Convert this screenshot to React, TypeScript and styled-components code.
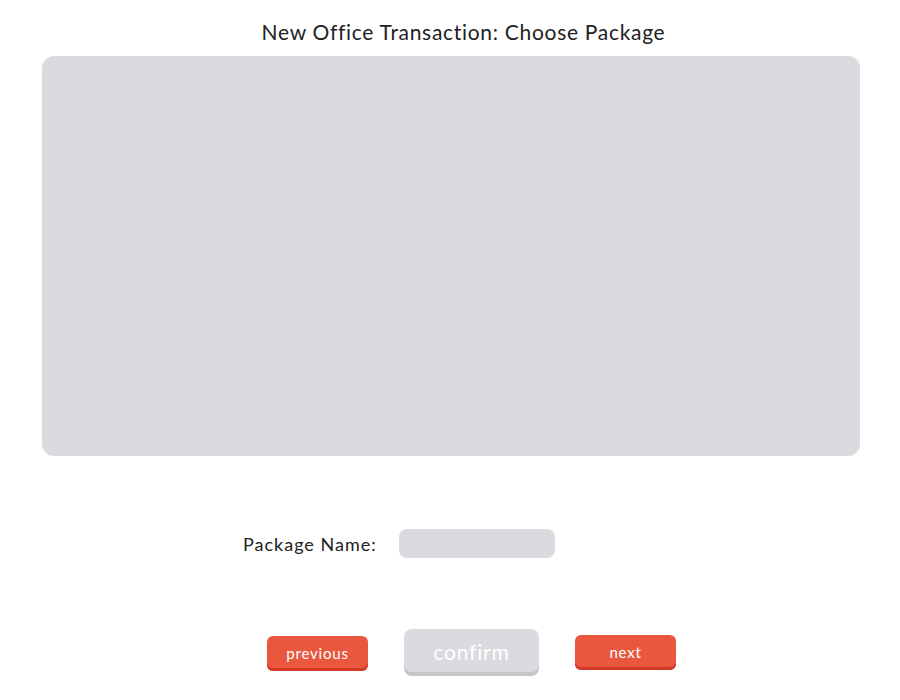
import React from "react";
import styled, { createGlobalStyle } from "styled-components";

const GlobalStyle = createGlobalStyle`
  body {
    margin: 0;
    background: #ffffff;
    font-family: "Lato", "Open Sans", sans-serif;
  }
`;

export default function App() {
  return (
    <>
      <GlobalStyle />
      <Page>
        <Title>New Office Transaction: Choose Package</Title>
        <Panel />
        <FieldRow>
          <Label>Package Name:</Label>
          <Input />
        </FieldRow>
        <ButtonRow>
          <RedButton $top={7}>previous</RedButton>
          <ConfirmButton>confirm</ConfirmButton>
          <RedButton $top={6}>next</RedButton>
        </ButtonRow>
      </Page>
    </>
  );
}

const Page = styled.div`
  width: 900px;
  height: 700px;
  display: flex;
  flex-direction: column;
  align-items: center;
  box-sizing: border-box;
  padding-top: 19px;
`;

const Title = styled.h1`
  margin: 0 0 0 27px;
  font-size: 21px;
  font-weight: 400;
  color: #222222;
  letter-spacing: 0.7px;
  height: 26px;
  line-height: 26px;
`;

const Panel = styled.div`
  margin-top: 11px;
  width: 818px;
  height: 400px;
  margin-left: 1px;
  background: #dadbdf;
  border-radius: 12px;
`;

const FieldRow = styled.div`
  align-self: flex-start;
  margin: 73px 0 0 243px;
  display: flex;
  align-items: center;
  gap: 22px;
`;

const Label = styled.span`
  font-size: 18px;
  color: #222222;
  letter-spacing: 1px;
`;

const Input = styled.div`
  width: 156px;
  height: 29px;
  background: #dadbdf;
  border-radius: 8px;
`;

const ButtonRow = styled.div`
  align-self: flex-start;
  margin: 71px 0 0 267px;
  display: flex;
  align-items: flex-start;
  gap: 36px;
`;

const RedButton = styled.button<{ $top: number }>`
  margin-top: ${(p) => p.$top}px;
  width: 101px;
  height: 35px;
  border: none;
  border-radius: 6px;
  background: #e9573f;
  box-shadow: inset 0 -3px 0 #d4392a;
  color: #ffffff;
  font-family: "Lato", "Open Sans", sans-serif;
  font-size: 15px;
  letter-spacing: 0.8px;
  padding: 0 0 2px;
`;

const ConfirmButton = styled.button`
  width: 135px;
  height: 47px;
  border: none;
  border-radius: 8px;
  background: #dadbdf;
  box-shadow: inset 0 -4px 0 #c5c6ca;
  color: #ffffff;
  font-family: "Lato", "Open Sans", sans-serif;
  font-size: 21px;
  letter-spacing: 0.8px;
  padding: 0 0 2px;
`;
